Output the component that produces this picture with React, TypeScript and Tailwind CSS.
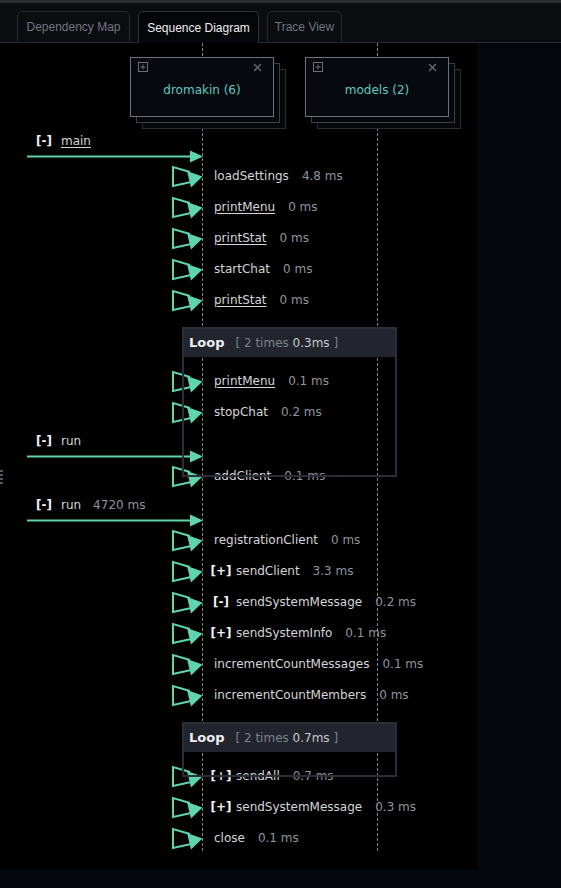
import React from 'react';

type Toggle = '+' | '-';

type Entry =
  | { kind: 'call'; name: string; toggle: Toggle; link?: boolean; ms?: string }
  | { kind: 'self'; name: string; ms: string; link?: boolean; toggle?: Toggle }
  | { kind: 'loop'; times: number; total: string; height: number };

const ARROW = '#5fd4b1';

const entries: Entry[] = [
  { kind: 'call', name: 'main', toggle: '-', link: true },
  { kind: 'self', name: 'loadSettings', ms: '4.8 ms' },
  { kind: 'self', name: 'printMenu', ms: '0 ms', link: true },
  { kind: 'self', name: 'printStat', ms: '0 ms', link: true },
  { kind: 'self', name: 'startChat', ms: '0 ms' },
  { kind: 'self', name: 'printStat', ms: '0 ms', link: true },
  { kind: 'loop', times: 2, total: '0.3ms', height: 150 },
  { kind: 'self', name: 'printMenu', ms: '0.1 ms', link: true },
  { kind: 'self', name: 'stopChat', ms: '0.2 ms' },
  { kind: 'call', name: 'run', toggle: '-' },
  { kind: 'self', name: 'addClient', ms: '0.1 ms' },
  { kind: 'call', name: 'run', toggle: '-', ms: '4720 ms' },
  { kind: 'self', name: 'registrationClient', ms: '0 ms' },
  { kind: 'self', name: 'sendClient', ms: '3.3 ms', toggle: '+' },
  { kind: 'self', name: 'sendSystemMessage', ms: '0.2 ms', toggle: '-' },
  { kind: 'self', name: 'sendSystemInfo', ms: '0.1 ms', toggle: '+' },
  { kind: 'self', name: 'incrementCountMessages', ms: '0.1 ms' },
  { kind: 'self', name: 'incrementCountMembers', ms: '0 ms' },
  { kind: 'loop', times: 2, total: '0.7ms', height: 55 },
  { kind: 'self', name: 'sendAll', ms: '0.7 ms', toggle: '+' },
  { kind: 'self', name: 'sendSystemMessage', ms: '0.3 ms', toggle: '+' },
  { kind: 'self', name: 'close', ms: '0.1 ms' },
];

function ParticipantBox({ label }: { label: string }) {
  return (
    <div className="relative w-[144px] h-[60px]">
      <div className="absolute left-[12px] top-[12px] w-full h-full border border-[#2a2d33] bg-[#05080b]" />
      <div className="absolute left-[6px] top-[6px] w-full h-full border border-[#3c4048] bg-[#05080b]" />
      <div className="relative w-full h-full border border-[#6b717a] bg-[#060a0e] flex items-center justify-center pt-[5px]">
        <svg className="absolute left-[7px] top-[4px]" width="10" height="10" viewBox="0 0 10 10">
          <rect x="0.5" y="0.5" width="9" height="9" fill="none" stroke="#6b7078" />
          <path d="M5 2.5v5M2.5 5h5" stroke="#6b7078" />
        </svg>
        <svg className="absolute right-[11px] top-[5px]" width="9" height="9" viewBox="0 0 9 9">
          <path d="M1 1l7 7M8 1l-7 7" stroke="#6b7078" strokeWidth="1.2" />
        </svg>
        <span className="text-[12px] text-[#5cc9c3]">{label}</span>
      </div>
    </div>
  );
}

function ToggleMark({ t }: { t: Toggle }) {
  return <span className="font-bold text-[#f1f3f5]">[{t}]</span>;
}

function SelfRow({ e }: { e: Extract<Entry, { kind: 'self' }> }) {
  return (
    <div className="flex h-[31px] items-center">
      <svg className="ml-[170px] shrink-0" width="34" height="24" viewBox="0 0 34 24">
        <path d="M20 8 L3 3 L3 22 L21 18" fill="none" stroke={ARROW} strokeWidth="2" />
        <path d="M32.5 12.5 L17 7 L21 23.5 Z" fill={ARROW} />
      </svg>
      {e.toggle ? (
        <>
          <span className="ml-[6px] w-[22px] text-center">
            <ToggleMark t={e.toggle} />
          </span>
          <span className="ml-[4px] text-[#d3d6db]">{e.name}</span>
        </>
      ) : (
        <span className={`ml-[10px] text-[#d3d6db] ${e.link ? 'underline underline-offset-2' : ''}`}>{e.name}</span>
      )}
      <span className="ml-[13px] text-[#8f959e]">{e.ms}</span>
    </div>
  );
}

function CallBlock({ e }: { e: Extract<Entry, { kind: 'call' }> }) {
  return (
    <div className="flex flex-col h-[33px]">
      <div className="flex h-[23px] shrink-0 pt-[7px] pl-[36px] leading-[15px]">
        <ToggleMark t={e.toggle} />
        <span className={`ml-[9px] text-[#d3d6db] ${e.link ? 'underline underline-offset-2' : ''}`}>{e.name}</span>
        {e.ms && <span className="ml-[12px] text-[#8f959e]">{e.ms}</span>}
      </div>
      <svg className="ml-[26px] shrink-0 overflow-visible" width="180" height="10" viewBox="0 0 180 10">
        <path d="M1 6.5 H166" stroke={ARROW} strokeWidth="2" />
        <path d="M164 0.5 L177 6.5 L164 12.5 Z" fill={ARROW} />
      </svg>
    </div>
  );
}

function LoopSpacer({ e }: { e: Extract<Entry, { kind: 'loop' }> }) {
  return (
    <div className="relative h-[50px]">
      <div
        className="absolute left-[182px] top-[12px] w-[215px] border-2 border-[#2a2e39] z-10"
        style={{ height: e.height }}
      >
        <div className="h-[28px] bg-[#22252e] flex items-center pl-[5px]">
          <span className="font-bold text-[13px] text-[#eef0f3]">Loop</span>
          <span className="ml-[11px] text-[12px] text-[#7c828c]">
            [ {e.times} times <span className="text-[#c5c9cf]">{e.total}</span> ]
          </span>
        </div>
      </div>
    </div>
  );
}

export default function App() {
  return (
    <div className="min-h-screen w-full bg-[#04070b]" style={{ fontFamily: '"Liberation Sans", Arial, sans-serif' }}>
      <div className="h-[3px] bg-[#2b2c2e]" />
      <div className="flex items-end gap-2 pl-[17px] h-[40px] bg-[#0a0c10] border-b border-[#252a35]">
        <div className="w-[113px] h-[32px] -mb-px flex items-center justify-center rounded-t-[5px] border border-[#252a35] text-[12px] text-[#6f7581]">
          Dependency Map
        </div>
        <div className="w-[121px] h-[32px] -mb-px flex items-center justify-center rounded-t-[5px] border border-b-0 border-[#2c313c] bg-[#050609] text-[12px] text-[#eceef1]">
          Sequence Diagram
        </div>
        <div className="w-[75px] h-[32px] -mb-px flex items-center justify-center rounded-t-[5px] border border-[#252a35] text-[12px] text-[#6f7581]">
          Trace View
        </div>
      </div>

      <div
        className="relative w-[477px] h-[826px] bg-black text-[12px]"
        style={{ fontFamily: '"DejaVu Sans", Verdana, sans-serif' }}
      >
        {/* lifelines */}
        <div className="absolute left-[202px] top-0 h-[808px] border-l border-dashed border-[#7d838d]" />
        <div className="absolute left-[377px] top-0 h-[808px] border-l border-dashed border-[#7d838d]" />

        {/* resize handle */}
        <div className="absolute left-0 top-[427px] flex flex-col gap-[2px]">
          <div className="w-[3px] h-[2px] bg-[#555b65]" />
          <div className="w-[3px] h-[2px] bg-[#555b65]" />
          <div className="w-[3px] h-[2px] bg-[#555b65]" />
          <div className="w-[3px] h-[2px] bg-[#555b65]" />
        </div>

        <div className="flex h-[84px] pt-[14px]">
          <div className="ml-[130px]">
            <ParticipantBox label="dromakin (6)" />
          </div>
          <div className="ml-[31px]">
            <ParticipantBox label="models (2)" />
          </div>
        </div>

        {entries.map((e, i) =>
          e.kind === 'self' ? (
            <SelfRow key={i} e={e} />
          ) : e.kind === 'call' ? (
            <CallBlock key={i} e={e} />
          ) : (
            <LoopSpacer key={i} e={e} />
          )
        )}
      </div>
    </div>
  );
}
